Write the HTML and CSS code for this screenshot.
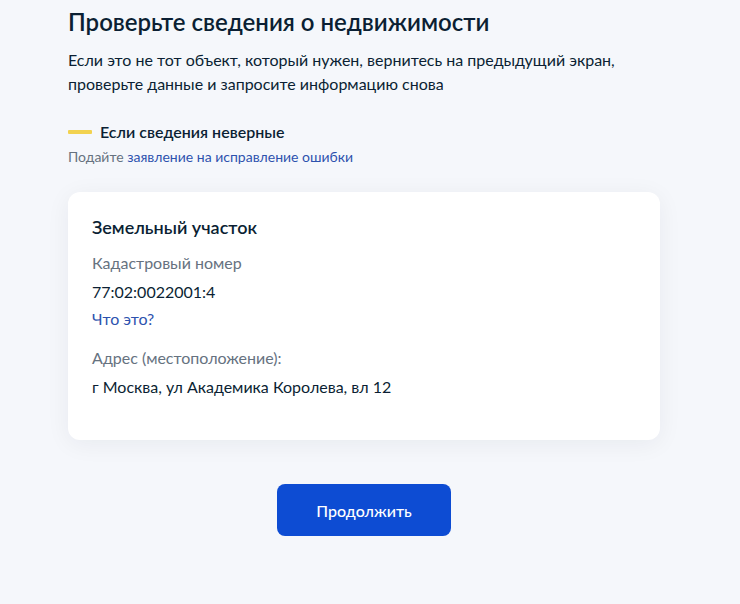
FILE: index.html
```html
<!DOCTYPE html>
<html lang="ru">
<head>
<meta charset="utf-8">
<title>Проверьте сведения о недвижимости</title>
<link rel="stylesheet" href="styles.css">
</head>
<body>
<main class="page">
  <h1 class="title">Проверьте сведения о недвижимости</h1>
  <p class="lead">Если это не тот объект, который нужен, вернитесь на предыдущий экран, проверьте данные и запросите информацию снова</p>
  <div class="warn">
    <span class="warn-bar"></span>
    <span class="warn-text">Если сведения неверные</span>
  </div>
  <p class="hint">Подайте <a class="link" href="#">заявление на исправление ошибки</a></p>

  <section class="card">
    <h2 class="card-title">Земельный участок</h2>
    <div class="label">Кадастровый номер</div>
    <div class="value">77:02:0022001:4</div>
    <a class="what" href="#">Что это?</a>
    <div class="label label-2">Адрес (местоположение):</div>
    <div class="value">г Москва, ул Академика Королева, вл 12</div>
  </section>

  <div class="actions">
    <button class="btn" type="button">Продолжить</button>
  </div>
</main>
</body>
</html>
```
FILE: styles.css
```css
html, body {
  margin: 0;
  padding: 0;
  background: #f5f7fb;
}
body {
  font-family: Lato, "Noto Sans", "Liberation Sans", sans-serif;
  color: #0b1f33;
}
.page {
  width: 592px;
  padding: 6px 0 40px 68px;
  display: flex;
  flex-direction: column;
}
.title {
  margin: 0;
  font-size: 24px;
  line-height: 32px;
  font-weight: 600;
  color: #0b1f33;
}
.lead {
  margin: 10px 0 0;
  font-size: 16px;
  line-height: 24px;
}
.warn {
  margin-top: 24px;
  display: flex;
  align-items: center;
  gap: 8px;
  height: 24px;
}
.warn-bar {
  width: 24px;
  height: 4px;
  background: #f2d24f;
  border-radius: 1px;
}
.warn-text {
  font-size: 16px;
  line-height: 24px;
  font-weight: 600;
}
.hint {
  margin: 3px 0 0;
  font-size: 14px;
  line-height: 20px;
  color: #66727f;
}
.link {
  color: #2d52ae;
  text-decoration: none;
}
.card {
  margin-top: 25px;
  background: #fff;
  border-radius: 12px;
  box-shadow: 0 4px 24px rgba(11, 31, 51, 0.06);
  padding: 23px 24px 41px;
  display: flex;
  flex-direction: column;
  align-items: flex-start;
}
.card-title {
  margin: 0;
  font-size: 18px;
  line-height: 24px;
  font-weight: 600;
}
.label {
  margin-top: 12px;
  font-size: 16px;
  line-height: 24px;
  color: #66727f;
}
.label-2 {
  margin-top: 15px;
}
.value {
  margin-top: 5px;
  font-size: 16px;
  line-height: 24px;
}
.what {
  margin-top: 3px;
  font-size: 16px;
  line-height: 24px;
  color: #2d52ae;
  text-decoration: none;
}
.actions {
  margin-top: 44px;
  display: flex;
  justify-content: center;
}
.btn {
  width: 174px;
  height: 52px;
  border: 0;
  border-radius: 8px;
  background: #0d4cd3;
  color: #fff;
  font-family: inherit;
  font-size: 16px;
  font-weight: 500;
}
```
